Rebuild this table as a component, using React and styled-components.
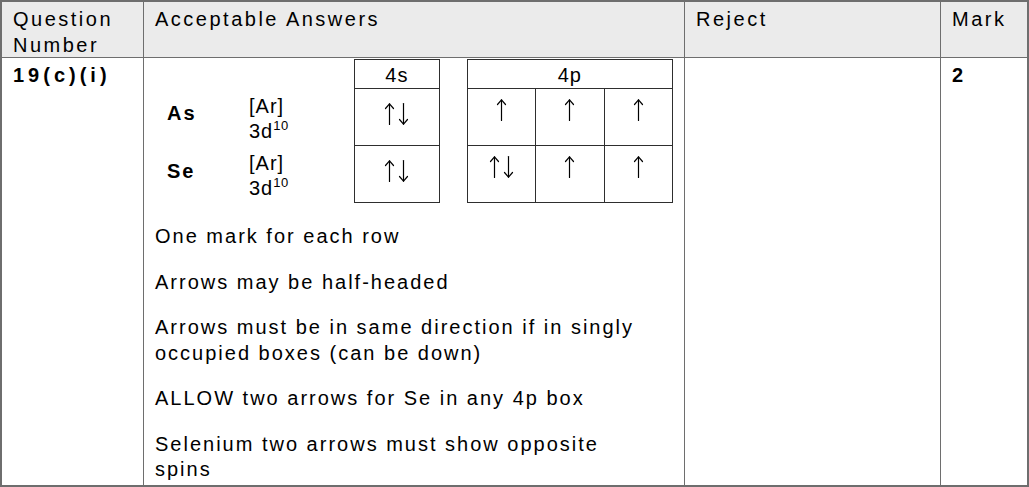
import React from 'react';
import styled, { createGlobalStyle } from 'styled-components';

const Global = createGlobalStyle`
  html, body { margin: 0; padding: 0; background: #fff; }
  body { font-family: "Liberation Sans", Arial, sans-serif; color: #000; }
`;

const Sheet = styled.div`
  display: grid;
  grid-template-columns: 141px 540px 255px 86px;
  grid-template-rows: 55px 427px;
  gap: 1px;
  padding: 2px;
  width: 1029px;
  box-sizing: border-box;
  background: #6e6e6e;
  font-size: 20px;
  letter-spacing: 2px;
`;

const Cell = styled.div`
  background: ${(p) => (p.$head ? '#ebebeb' : '#ffffff')};
  padding: ${(p) => (p.$head ? '4px 11px' : '5px 11px')};
  line-height: ${(p) => (p.$head ? '26px' : '25.5px')};
  font-weight: ${(p) => (p.$bold ? 700 : 400)};
  letter-spacing: ${(p) => p.$spacing || (p.$head ? '2.5px' : 'inherit')};
  min-width: 0;
`;

const Diagram = styled.div`
  display: flex;
  align-items: flex-start;
  margin: -4px 0 0 12px;
`;

const ConfigGrid = styled.div`
  display: grid;
  grid-template-columns: 82px 105px;
  grid-template-rows: 30px 57px 57px;
`;

const Element = styled.div`
  grid-column: 1;
  grid-row: ${(p) => p.$row};
  align-self: center;
  font-weight: 700;
  padding-bottom: ${(p) => p.$lift}px;
`;

const Config = styled.div`
  grid-column: 2;
  grid-row: ${(p) => p.$row};
  align-self: center;
  padding-top: 3px;
  letter-spacing: 1px;
`;

const Sup = styled.sup`
  font-size: 13px;
  letter-spacing: 0.5px;
  vertical-align: 8px;
  line-height: 0;
`;

const Subshell = styled.div`
  display: grid;
  width: ${(p) => p.$w}px;
  margin-left: ${(p) => p.$offset || 0}px;
  grid-template-columns: repeat(${(p) => p.$cols}, 1fr);
  grid-template-rows: 29px 57px 57px;
  border-top: 1px solid #2e2e2e;
  border-left: 1px solid #2e2e2e;
  box-sizing: border-box;
`;

const SubHead = styled.div`
  grid-column: 1 / -1;
  border-right: 1px solid #2e2e2e;
  border-bottom: 1px solid #2e2e2e;
  display: flex;
  align-items: center;
  justify-content: center;
  line-height: 1;
  letter-spacing: 1px;
  padding-top: 2px;
`;

const Orbital = styled.div`
  border-right: 1px solid #2e2e2e;
  border-bottom: 1px solid #2e2e2e;
  display: flex;
  align-items: center;
  justify-content: center;
  gap: 3px;
  padding-bottom: ${(p) => p.$lift}px;
`;

const SpinSvg = styled.svg`
  display: block;
  width: 11px;
  height: 22px;
  overflow: visible;
`;

const Spin = ({ down }) => (
  <SpinSvg viewBox="0 0 11 22" role="img" aria-label={down ? '↓' : '↑'}>
    <g
      fill="none"
      stroke="#000"
      strokeWidth="1.2"
      strokeLinecap="round"
      strokeLinejoin="round"
      transform={down ? 'rotate(180 5.5 11)' : undefined}
    >
      <line x1="5.5" y1="0.8" x2="5.5" y2="21.5" />
      <polyline points="1.5,5.5 5.5,0.8 9.5,5.5" />
    </g>
  </SpinSvg>
);

const Notes = styled.div`
  display: flex;
  flex-direction: column;
  gap: 20px;
  margin-top: 21px;
  max-width: 495px;
`;

const Note = styled.p`
  margin: 0;
`;

const Pair = () => (
  <>
    <Spin />
    <Spin down />
  </>
);

export default function App() {
  return (
    <>
      <Global />
      <Sheet>
        <Cell $head>Question Number</Cell>
        <Cell $head>Acceptable Answers</Cell>
        <Cell $head>Reject</Cell>
        <Cell $head>Mark</Cell>

        <Cell $bold $spacing="4px">19(c)(i)</Cell>
        <Cell>
          <Diagram>
            <ConfigGrid>
              <Element $row={2} $lift={7}>As</Element>
              <Config $row={2}>
                [Ar]
                <br />
                3d<Sup>10</Sup>
              </Config>
              <Element $row={3} $lift={5}>Se</Element>
              <Config $row={3}>
                [Ar]
                <br />
                3d<Sup>10</Sup>
              </Config>
            </ConfigGrid>
            <Subshell $cols={1} $w={86}>
              <SubHead>4s</SubHead>
              <Orbital $lift={6}><Pair /></Orbital>
              <Orbital $lift={6}><Pair /></Orbital>
            </Subshell>
            <Subshell $cols={3} $w={207} $offset={27}>
              <SubHead>4p</SubHead>
              <Orbital $lift={14}><Spin /></Orbital>
              <Orbital $lift={14}><Spin /></Orbital>
              <Orbital $lift={14}><Spin /></Orbital>
              <Orbital $lift={14}><Pair /></Orbital>
              <Orbital $lift={14}><Spin /></Orbital>
              <Orbital $lift={14}><Spin /></Orbital>
            </Subshell>
          </Diagram>
          <Notes>
            <Note>One mark for each row</Note>
            <Note>Arrows may be half-headed</Note>
            <Note>Arrows must be in same direction if in singly occupied boxes (can be down)</Note>
            <Note>ALLOW two arrows for Se in any 4p box</Note>
            <Note>Selenium two arrows must show opposite spins</Note>
          </Notes>
        </Cell>
        <Cell />
        <Cell $bold>2</Cell>
      </Sheet>
    </>
  );
}
